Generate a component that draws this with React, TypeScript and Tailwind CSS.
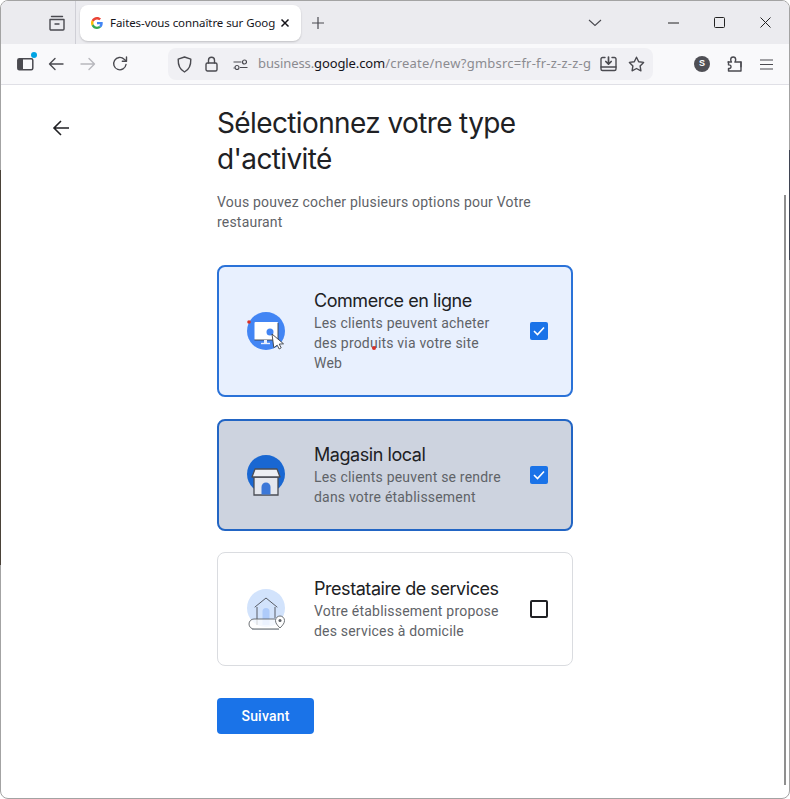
import React from "react";

const ic = { fill: "none", stroke: "currentColor", strokeWidth: 1.4, strokeLinecap: "round", strokeLinejoin: "round" } as const;

function GoogleG() {
  return (
    <svg width="12" height="12" viewBox="0 0 48 48">
      <path fill="#EA4335" d="M24 9.5c3.5 0 6.7 1.2 9.2 3.6l6.9-6.9C35.9 2.4 30.5 0 24 0 14.6 0 6.5 5.4 2.6 13.2l8 6.2C12.5 13.6 17.8 9.5 24 9.5z" />
      <path fill="#4285F4" d="M46.9 24.5c0-1.6-.1-3.1-.4-4.5H24v9h12.9c-.6 3-2.2 5.5-4.7 7.2l7.7 6c4.5-4.2 7-10.3 7-17.7z" />
      <path fill="#FBBC05" d="M10.6 28.6c-.5-1.4-.8-3-.8-4.6s.3-3.2.8-4.6l-8-6.2C.9 16.5 0 20.1 0 24s.9 7.5 2.6 10.8l8-6.2z" />
      <path fill="#34A853" d="M24 48c6.5 0 11.9-2.1 15.9-5.8l-7.7-6c-2.1 1.4-4.9 2.3-8.2 2.3-6.2 0-11.5-4.1-13.4-9.9l-8 6.2C6.5 42.6 14.6 48 24 48z" />
    </svg>
  );
}

function TabBar() {
  return (
    <div className="h-[43px] shrink-0 bg-[#ebebef] flex items-center text-[#4a4a50]">
      <div className="w-[75px] h-full shrink-0 flex items-center justify-end pr-[9px] border-r border-[#cfcfd6]">
        <svg width="18" height="18" viewBox="0 0 18 18" {...ic}>
          <path d="M3.5 2.5h11M2 5.5h14v9.500a1 1 0 0 1-1 1H3a1 1 0 0 1-1-1z" />
          <path d="M7 10h4" />
        </svg>
      </div>
      <div className="ml-[4px] w-[221px] h-[36px] bg-white rounded-[8px] shadow-[0_1px_2px_rgba(0,0,0,0.18)] flex items-center pl-[11px]">
        <GoogleG />
        <span className="ml-[7px] w-[165px] overflow-hidden whitespace-nowrap text-[11.5px] tracking-[-0.08px] text-[#15141a] font-['Noto_Sans','Open_Sans',sans-serif]">
          Faites-vous connaître sur Google
        </span>
        <svg className="ml-[5px] text-[#15141a]" width="10" height="10" viewBox="0 0 10 10" fill="none" stroke="currentColor" strokeWidth="1.5">
          <path d="M1.5 1.5l7 7M8.5 1.5l-7 7" />
        </svg>
      </div>
      <svg className="ml-[10px]" width="14" height="14" viewBox="0 0 14 14" fill="none" stroke="currentColor" strokeWidth="1.2">
        <path d="M7 1v12M1 7h12" />
      </svg>
      <div className="flex-1" />
      <svg className="mr-[66px]" width="14" height="8" viewBox="0 0 14 8" fill="none" stroke="currentColor" strokeWidth="1.1">
        <path d="M1 1l6 5.5L13 1" />
      </svg>
      <svg className="mr-[35px]" width="11" height="2" viewBox="0 0 11 2" fill="none" stroke="#222" strokeWidth="1">
        <path d="M0 1h11" />
      </svg>
      <svg className="mr-[35px]" width="11" height="11" viewBox="0 0 11 11" fill="none" stroke="#222" strokeWidth="1">
        <rect x="0.5" y="0.5" width="10" height="10" rx="1" />
      </svg>
      <svg className="mr-[18px]" width="11" height="11" viewBox="0 0 11 11" fill="none" stroke="#222" strokeWidth="1">
        <path d="M0.5 0.5l10 10M10.5 0.5l-10 10" />
      </svg>
    </div>
  );
}

function Toolbar() {
  return (
    <div className="h-[41px] shrink-0 bg-[#f9f9fb] border-b border-[#e0e0e6] flex items-center text-[#4a4a50]">
      <div className="relative ml-[16px]">
        <svg className="block" width="17" height="14" viewBox="0 0 17 14">
          <rect x="0.8" y="1.8" width="15" height="11" rx="1.5" fill="none" stroke="#4a4a50" strokeWidth="1.5" />
          <rect x="1" y="2" width="5" height="10.5" fill="#4a4a50" />
        </svg>
        <span className="absolute -top-[5px] -right-[3px] w-[6px] h-[6px] rounded-full bg-[#00a4e4]" />
      </div>
      <svg className="ml-[14px]" width="16" height="14" viewBox="0 0 16 14" {...ic}>
        <path d="M15 7H1.5M7 1.5L1.5 7 7 12.5" />
      </svg>
      <svg className="ml-[16px] text-[#b8b8bd]" width="16" height="14" viewBox="0 0 16 14" {...ic}>
        <path d="M1 7h13.5M9 1.5L14.5 7 9 12.5" />
      </svg>
      <svg className="ml-[16px]" width="16" height="16" viewBox="0 0 16 16" {...ic}>
        <path d="M14 8.5A6.2 6.2 0 1 1 12.2 3.2L14.2 5" />
        <path d="M14.5 1v4.200h-4.200" />
      </svg>
      <div className="ml-[40px] w-[485px] h-[32px] bg-[#f0f0f4] rounded-[8px] flex items-center pl-[9px]">
        <svg width="15" height="17" viewBox="0 0 15 17" {...ic}>
          <path d="M7.5 1l6.3 2.2c.2 5.5-1.6 10.3-6.3 12.8C2.8 13.5 1 8.700 1.200 3.200z" />
        </svg>
        <svg className="ml-[13px]" width="13" height="16" viewBox="0 0 13 16" {...ic}>
          <rect x="1" y="7" width="11" height="8" rx="1.5" />
          <path d="M3.500 7V4.200a3 3 0 0 1 6 0V7" />
        </svg>
        <svg className="ml-[15px]" width="15" height="11" viewBox="0 0 15 11" fill="none" stroke="currentColor" strokeWidth="1.2">
          <path d="M0.500 3h8M0.500 9h1" />
          <circle cx="11.500" cy="3" r="2" />
          <circle cx="4" cy="8.500" r="2" />
          <path d="M7 8.500h7.500" />
        </svg>
        <span className="ml-[10px] w-[333px] overflow-hidden whitespace-nowrap text-[13px] tracking-[-0.1px] text-[#8b8b90] font-['Noto_Sans','Open_Sans',sans-serif]">
          business.<span className="text-[#15141a]">google.com</span><span className="tracking-[0.22px]">/create/new?gmbsrc=fr-fr-z-z-z-g</span>
        </span>
        <svg className="ml-[9px]" width="17" height="16" viewBox="0 0 17 16" {...ic}>
          <path d="M5 1.500H2.500a1.500 1.500 0 0 0-1.500 1.500v10a1.500 1.500 0 0 0 1.500 1.500h12a1.500 1.500 0 0 0 1.500-1.500V3a1.500 1.500 0 0 0-1.500-1.500H12" />
          <path d="M1 11h15" />
          <path d="M8.500 1v6.500M5.800 5.500l2.700 2.700 2.700-2.700" strokeWidth="1.7" />
        </svg>
        <svg className="ml-[11px]" width="17" height="16" viewBox="0 0 17 16" {...ic}>
          <path d="M8.500 1.200l2.200 4.500 4.900.7-3.500 3.500.8 4.900-4.400-2.300-4.400 2.300.8-4.900-3.500-3.500 4.900-.7z" />
        </svg>
      </div>
      <div className="ml-[41px] w-[16px] h-[16px] rounded-full bg-[#4f4f55] text-white text-[9px] font-bold flex items-center justify-center font-['Liberation_Sans',sans-serif]">
        S
      </div>
      <svg className="ml-[17px]" width="15" height="16" viewBox="0 0 15 16" {...ic}>
        <path d="M1 6h3.500c-.5-1-.8-1.500-.8-2.300C3.700 2.300 4.800 1 6.200 1s2.500 1.200 2.500 2.700c0 .8-.3 1.300-.8 2.300H14v4.800" />
        <path d="M14 6v9H1.500v-2.500c1.500.2 2.500-.6 2.500-1.800S3 8.700 1.500 8.900V6" />
      </svg>
      <svg className="ml-[18px]" width="13" height="11" viewBox="0 0 13 11" fill="none" stroke="currentColor" strokeWidth="1.2">
        <path d="M0 1h13M0 5.500h13M0 10h13" />
      </svg>
    </div>
  );
}

function OnlineIcon() {
  return (
    <svg width="40" height="40" viewBox="0 0 40 40">
      <circle cx="20" cy="20" r="19" fill="#4285f4" />
      <rect x="8.500" y="11" width="23.500" height="18" rx="1" fill="#fff" />
      <path d="M8.500 29h23.500M32 12v17" stroke="#3c4043" strokeWidth="0.9" />
      <path d="M15 32.500h9" stroke="#e8f0fe" strokeWidth="1.400" />
      <path d="M18 29h3v3h-3z" fill="#e8f0fe" />
      <circle cx="24" cy="21" r="3.500" fill="#4285f4" />
      <path d="M26 23l11.500 9.800-4.300.3 2 3.700-2 1.200-2-3.800-3.400 2.500z" fill="#fff" stroke="#3c4043" strokeWidth="0.9" strokeLinejoin="round" />
      <circle cx="3" cy="11" r="1.800" fill="#d93025" />
    </svg>
  );
}

function StoreIcon() {
  return (
    <svg width="40" height="42" viewBox="0 0 40 42">
      <circle cx="20" cy="20" r="19" fill="#1967d2" />
      <path d="M8 23h24v18H8z" fill="#e4e7ee" stroke="#4a4d55" strokeWidth="1.300" />
      <path d="M9 15h22l3 8H6z" fill="#eceff4" stroke="#4a4d55" strokeWidth="1.300" strokeLinejoin="round" />
      <path d="M15.500 40.500V33a4.500 4.500 0 0 1 9 0v7.500z" fill="#3c78d8" />
    </svg>
  );
}

function ServiceIcon() {
  return (
    <svg width="40" height="42" viewBox="0 0 40 42" fill="none">
      <circle cx="20" cy="20" r="19" fill="#d2e3fc" />
      <path d="M11 37V19M29 30V19" stroke="#4a4d55" strokeWidth="0.9" />
      <path d="M9 19L20 10l11 9" stroke="#4a4d55" strokeWidth="0.9" strokeLinejoin="round" strokeLinecap="round" />
      <path d="M16.500 37V23.500a3.500 3.500 0 0 1 7 0V37z" fill="#aecbfa" />
      <path d="M29 31H8a5 5 0 0 0 0 10h25" fill="#fff" fillOpacity="0.75" stroke="#5f6368" strokeWidth="0.9" />
      <path d="M6 41.300h27" stroke="#9aa0a6" strokeWidth="1.200" />
      <path d="M34 40c-3-3-4.500-5-4.500-7.500a4.500 4.500 0 0 1 9 0c0 2.500-1.500 4.500-4.500 7.500z" fill="#fff" stroke="#5f6368" strokeWidth="0.9" />
      <circle cx="34" cy="32.500" r="1.500" fill="#5f6368" />
    </svg>
  );
}

function Check({ on }: { on: boolean }) {
  if (!on) return <div className="w-[18px] h-[18px] shrink-0 rounded-[2px] border-2 border-[#202124]" />;
  return (
    <div className="w-[18px] h-[18px] shrink-0 rounded-[2px] bg-[#1a73e8] flex items-center justify-center">
      <svg width="12" height="10" viewBox="0 0 12 10" fill="none" stroke="#fff" strokeWidth="1.600">
        <path d="M1 5l3.500 3.500L11 1.500" />
      </svg>
    </div>
  );
}

function Card({ cls, icon, title, lines, on, children }: { cls: string; icon: React.ReactNode; title: string; lines: string[]; on: boolean; children?: React.ReactNode }) {
  return (
    <div className={`relative w-[356px] rounded-[8px] flex items-center ${cls}`}>
      <div className="w-[40px] shrink-0 flex justify-center">{icon}</div>
      <div className="ml-[28px] w-[197px] shrink-0">
        <div className="text-[18px] leading-[24px] text-[#202124] font-['Inter',sans-serif] tracking-[-0.45px]">{title}</div>
        {lines.map((l) => (
          <div key={l} className="text-[14px] leading-[20px] tracking-[0.2px] text-[#5f6368] whitespace-nowrap">{l}</div>
        ))}
      </div>
      <div className="flex-1" />
      <Check on={on} />
      {children}
    </div>
  );
}

export default function App() {
  return (
    <div className="relative w-[790px] h-[799px] bg-white font-['Roboto',sans-serif]">
      <div className="w-full h-full flex flex-col overflow-hidden rounded-[8px] border border-[#a3a3a3] bg-white">
        <TabBar />
        <Toolbar />
        <div className="flex-1 flex relative">
          <div className="w-[216px] shrink-0 pl-[51px] pt-[34px]">
            <svg width="18" height="18" viewBox="0 0 18 18" fill="none" stroke="#202124" strokeWidth="1.600">
              <path d="M17 9H2M9 2L2 9l7 7" />
            </svg>
          </div>
          <div className="flex-1 pt-[20px]">
            <h1 className="w-[340px] text-[28px] leading-[36px] text-[#202124] font-['Inter',sans-serif] tracking-[-0.62px]">
              Sélectionnez votre type d'activité
            </h1>
            <p className="mt-[15px] w-[340px] text-[14px] leading-[20px] tracking-[0.2px] text-[#5f6368]">
              Vous pouvez cocher plusieurs options pour Votre restaurant
            </p>
            <div className="mt-[33px] flex flex-col gap-[21px]">
              <Card cls="h-[132px] mb-[1px] border-2 border-[#2a72d8] bg-[#e8f0fe] pl-[27px] pr-[23px]" icon={<OnlineIcon />} title="Commerce en ligne" lines={["Les clients peuvent acheter", "des produits via votre site", "Web"]} on>
                <span className="absolute left-[153px] top-[79px] w-[4px] h-[4px] rounded-full bg-[#d93025]" />
              </Card>
              <Card cls="h-[112px] border-2 border-[#2265c4] bg-[#cdd3df] pl-[27px] pr-[23px]" icon={<StoreIcon />} title="Magasin local" lines={["Les clients peuvent se rendre", "dans votre établissement"]} on />
              <Card cls="h-[114px] border border-[#dadce0] bg-white pl-[28px] pr-[24px]" icon={<ServiceIcon />} title="Prestataire de services" lines={["Votre établissement propose", "des services à domicile"]} on={false} />
            </div>
            <button className="mt-[32px] w-[97px] h-[36px] rounded-[4px] bg-[#1a73e8] text-white text-[14px] font-medium tracking-[0.2px]">
              Suivant
            </button>
          </div>
          <div className="absolute right-[3px] top-[110px] bottom-[13px] w-[2px] bg-[#8f8f8f]" />
        </div>
      </div>
      <div className="absolute left-0 top-[170px] h-[395px] w-[1px] bg-[#4a4238]" />
      <div className="absolute right-0 top-[150px] h-[110px] w-[1px] bg-[#3f4452]" />
    </div>
  );
}
